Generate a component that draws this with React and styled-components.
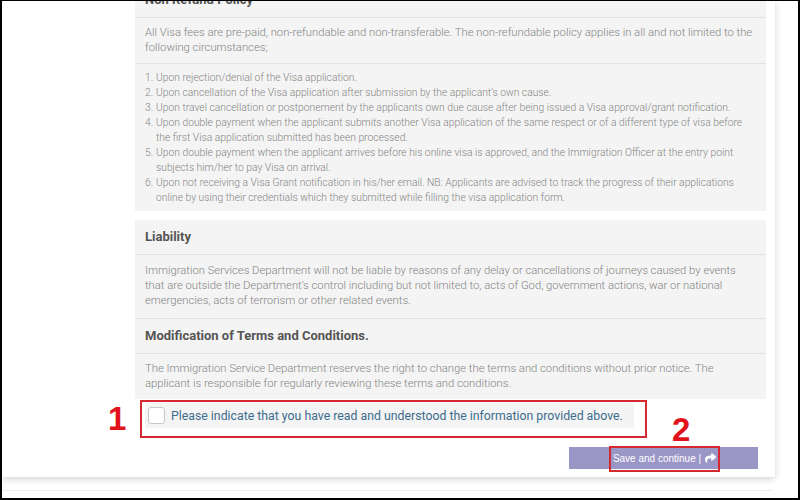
import React from "react";
import styled, { createGlobalStyle } from "styled-components";

const Global = createGlobalStyle`
  html, body { margin: 0; padding: 0; background: #fff; }
  body { font-family: Roboto, "Liberation Sans", Arial, sans-serif; }
  * { box-sizing: border-box; }
`;

const Frame = styled.div`
  position: relative;
  width: 800px;
  height: 500px;
  overflow: hidden;
  background: #fff;
  border-style: solid;
  border-color: #000;
  border-width: 1px 2px 2px 2px;
`;

const Card = styled.div`
  width: 773px;
  height: 476px;
  background: #fff;
  box-shadow: 0 2px 7px rgba(0, 0, 0, 0.18);
  padding: 0 9px 0 133px;
  display: flex;
  flex-direction: column;
`;

const Content = styled.div`
  margin-top: -18px;
  display: flex;
  flex-direction: column;
`;

const Panel = styled.section`
  background: #f4f4f4;
  display: flex;
  flex-direction: column;
  & + & {
    margin-top: 9px;
  }
`;

const Heading = styled.h3`
  margin: 0;
  height: 35px;
  padding: 0 10px 2px;
  display: flex;
  align-items: center;
  font-size: 13px;
  font-weight: 700;
  color: #555;
  border-bottom: 1px solid #e3e3e3;
`;

const Para = styled.p`
  margin: 0;
  padding: ${(p) => p.$pad || "7px 9px 8px 10px"};
  font-size: 11.25px;
  font-weight: 300;
  line-height: 15px;
  color: #848484;
  border-bottom: 1px solid #e3e3e3;
  &:last-child { border-bottom: none; }
`;

const List = styled.ol`
  margin: 0;
  padding: 6px 12px 6px 10px;
  list-style: none;
  font-size: 10.3px;
  font-weight: 300;
  line-height: 15px;
  color: #848484;
`;

const Item = styled.li`
  display: flex;
  & > span:first-child {
    flex: 0 0 11px;
  }
`;

const AgreeRow = styled.label`
  align-self: flex-start;
  margin: 4px 0 0 10px;
  display: inline-flex;
  align-items: center;
  gap: 6px;
  padding: 4px 11px 4px 3px;
  background: #f4f4f4;
  font-size: 12.3px;
  color: #3b6c8e;
`;

const Box = styled.span`
  width: 17px;
  height: 17px;
  border: 1px solid #c8c8c8;
  border-radius: 3px;
  background: #fff;
  flex: none;
`;

const Actions = styled.div`
  display: flex;
  justify-content: flex-end;
  margin-top: 19px;
  padding-right: 8px;
`;

const SaveButton = styled.button`
  width: 189px;
  height: 22px;
  border: none;
  background: #9a96c6;
  color: #fff;
  font-family: "Liberation Sans", Arial, sans-serif;
  font-size: 10px;
  display: flex;
  align-items: center;
  justify-content: center;
  gap: 4px;
  padding: 0 0 0 2px;
`;

const BottomRule = styled.div`
  margin-top: 13px;
  width: 770px;
  height: 1px;
  background: #ececec;
`;

const Mark = styled.div`
  position: absolute;
  border: 2px solid #d42a2f;
`;

const Num = styled.span`
  position: absolute;
  font-family: "Liberation Sans", Arial, sans-serif;
  font-weight: 700;
  font-size: 33px;
  line-height: 1;
  color: #e0131d;
`;

const ShareIcon = () => (
  <svg width="11" height="10" viewBox="0 0 512 448" fill="#fff">
    <path d="M503.7 138.3 327.7 2.3C312.3-9.6 288 1.2 288 22v81.6C128.6 105.4 0 137.3 0 288.3c0 61 39.3 121.4 82.7 153 13.5 9.8 32.8-2.5 27.8-18.4C65.5 279.5 131.9 241.2 288 239.1V328c0 20.8 24.3 31.6 39.7 19.7l176-136c11-8.5 11-24.9 0-33.4z" />
  </svg>
);

const refundCases = [
  "Upon rejection/denial of the Visa application.",
  "Upon cancellation of the Visa application after submission by the applicant’s own cause.",
  "Upon travel cancellation or postponement by the applicants own due cause after being issued a Visa approval/grant notification.",
  "Upon double payment when the applicant submits another Visa application of the same respect or of a different type of visa before the first Visa application submitted has been processed.",
  "Upon double payment when the applicant arrives before his online visa is approved, and the Immigration Officer at the entry point subjects him/her to pay Visa on arrival.",
  "Upon not receiving a Visa Grant notification in his/her email. NB: Applicants are advised to track the progress of their applications online by using their credentials which they submitted while filling the visa application form.",
];

export default function App() {
  return (
    <Frame>
      <Global />
      <Card>
        <Content>
          <Panel>
            <Heading>Non Refund Policy</Heading>
            <Para>
              All Visa fees are pre-paid, non-refundable and non-transferable. The non-refundable policy applies in all and not limited to the following circumstances;
            </Para>
            <List>
              {refundCases.map((t, i) => (
                <Item key={i}>
                  <span>{i + 1}.</span>
                  <span>{t}</span>
                </Item>
              ))}
            </List>
          </Panel>
          <Panel>
            <Heading>Liability</Heading>
            <Para $pad="8px 9px 10px 10px">
              Immigration Services Department will not be liable by reasons of any delay or cancellations of journeys caused by events that are outside the Department’s control including but not limited to, acts of God, government actions, war or national emergencies, acts of terrorism or other related events.
            </Para>
            <Heading>Modification of Terms and Conditions.</Heading>
            <Para>
              The Immigration Service Department reserves the right to change the terms and conditions without prior notice. The applicant is responsible for regularly reviewing these terms and conditions.
            </Para>
          </Panel>
          <AgreeRow>
            <Box />
            Please indicate that you have read and understood the information provided above.
          </AgreeRow>
          <Actions>
            <SaveButton>
              Save and continue | <ShareIcon />
            </SaveButton>
          </Actions>
        </Content>
      </Card>
      <BottomRule />
      <Mark style={{ left: 138, top: 399, width: 507, height: 38 }} />
      <Mark style={{ left: 607, top: 445, width: 111, height: 26 }} />
      <Num style={{ left: 106, top: 401 }}>1</Num>
      <Num style={{ left: 670, top: 412 }}>2</Num>
    </Frame>
  );
}
